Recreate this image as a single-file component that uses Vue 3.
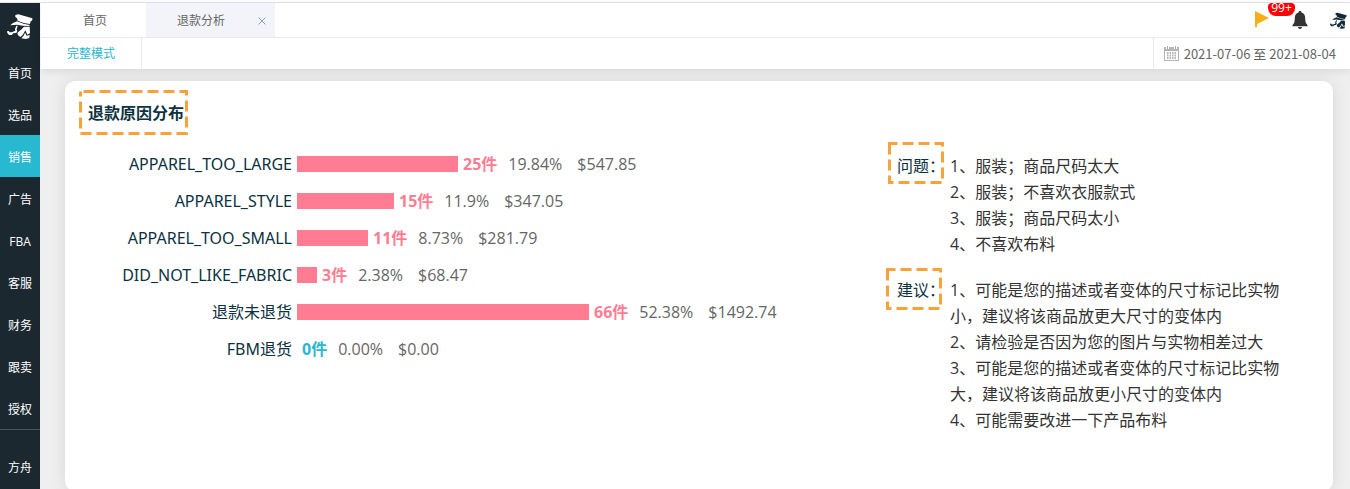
<script setup>
const navItems = ['首页', '选品', '销售', '广告', 'FBA', '客服', '财务', '跟卖', '授权']
const activeNav = '销售'

const PX_PER_PERCENT = 8.1
const MAX_BAR = 292

const reasons = [
  { label: 'APPAREL_TOO_LARGE', count: 25, percent: '19.84%', amount: '$547.85' },
  { label: 'APPAREL_STYLE', count: 15, percent: '11.9%', amount: '$347.05' },
  { label: 'APPAREL_TOO_SMALL', count: 11, percent: '8.73%', amount: '$281.79' },
  { label: 'DID_NOT_LIKE_FABRIC', count: 3, percent: '2.38%', amount: '$68.47' },
  { label: '退款未退货', count: 66, percent: '52.38%', amount: '$1492.74' },
  { label: 'FBM退货', count: 0, percent: '0.00%', amount: '$0.00' },
]
const barWidth = (r) => Math.ceil(Math.min(parseFloat(r.percent) * PX_PER_PERCENT, MAX_BAR)) + 'px'

const notes = [
  {
    title: '问题：',
    key: 'problem',
    lines: ['1、服装；商品尺码太大', '2、服装；不喜欢衣服款式', '3、服装；商品尺码太小', '4、不喜欢布料'],
  },
  {
    title: '建议：',
    key: 'advice',
    lines: [
      '1、可能是您的描述或者变体的尺寸标记比实物小，建议将该商品放更大尺寸的变体内',
      '2、请检验是否因为您的图片与实物相差过大',
      '3、可能是您的描述或者变体的尺寸标记比实物大，建议将该商品放更小尺寸的变体内',
      '4、可能需要改进一下产品布料',
    ],
  },
]
</script>

<template>
  <div class="app">
    <svg class="symbols" width="0" height="0" aria-hidden="true">
      <symbol id="detective" viewBox="6 4 78 78">
        <path d="M31 7 L40 5 L82 17 L82 22 L76 28 L75 34 L56 31 L38 24 L36 17 L31 13 Z" />
        <path d="M36 26 L55 33 L74 37 L73 40 L54 39 L36 36 L16 38 L24 31 Z" />
        <path d="M34 39 L38 39 L35 50 L37 55 L34 61 L24 62 L21 67 L12 67 L7 61 L6 56 L11 55 L14 59 L20 59 L31 54 L30 49 Z" />
        <path d="M57 42 L74 42 L75 62 L67 66 L61 53 L57 60 L53 67 L46 73 L39 68 L37 61 L44 54 L50 50 Z" />
        <path d="M60 60 L65 69 L74 67 L73 76 L62 79 L49 77 L56 69 Z" />
      </symbol>
    </svg>

    <div class="shell">
      <aside class="sidebar">
        <a class="brand" href="#" aria-label="方舟">
          <svg class="brand-logo"><use href="#detective" /></svg>
        </a>
        <nav>
          <a v-for="item in navItems" :key="item" href="#" class="nav-item" :class="{ active: item === activeNav }">{{ item }}</a>
          <a href="#" class="nav-item nav-last">方舟</a>
        </nav>
      </aside>

      <div class="page">
        <header class="header">
          <div class="tabs">
            <button class="tab" type="button">首页</button>
            <div class="tab current">
              <button class="tab-name" type="button">退款分析</button>
              <button class="tab-close" type="button" aria-label="关闭">
                <svg width="8" height="8" viewBox="0 0 8 8"><path d="M0.5 0.5 L7.5 7.5 M7.5 0.5 L0.5 7.5" /></svg>
              </button>
            </div>
            <div class="tools">
              <button class="tool flag" type="button" aria-label="消息">
                <svg width="15" height="17" viewBox="0 0 15 17"><path d="M0 0 L14 7 L2 13 V16 H0 Z" fill="#faad14" /></svg>
                <span class="badge">99+</span>
              </button>
              <button class="tool" type="button" aria-label="通知">
                <svg width="16" height="18" viewBox="0 0 16 18">
                  <path d="M8 0 C9 0 9.500 0.700 9.500 1.500 C12 2.200 13.200 4.200 13.200 7 C13.200 11 13.800 12.500 15.500 14 V15.200 H0.500 V14 C2.200 12.500 2.800 11 2.800 7 C2.800 4.200 4 2.200 6.500 1.500 C6.500 0.700 7 0 8 0 Z M6 16 H10 C10 17.300 9 18 8 18 C7 18 6 17.300 6 16 Z" fill="#333" />
                </svg>
              </button>
              <button class="tool user" type="button" aria-label="账户">
                <svg class="user-logo"><use href="#detective" /></svg>
              </button>
            </div>
          </div>
          <div class="toolbar">
            <button class="mode" type="button">完整模式</button>
            <button class="dates" type="button">
              <svg width="15" height="15" viewBox="0 0 15 15">
                <path d="M0 1 H15 V15 H0 Z M1 5 V14 H14 V5 Z" fill="#b5b5b5" fill-rule="evenodd" />
                <path d="M2 0 H5 V3 H2 Z M10 0 H13 V3 H10 Z" fill="#fff" />
                <path d="M3 0 H4 V3 H3 Z M11 0 H12 V3 H11 Z" fill="#aaa" />
                <path d="M3 7 H12 M3 9.500 H12 M3 12 H12" stroke="#b5b5b5" stroke-width="2" stroke-dasharray="1.500 1" />
              </svg>
              <span>2021-07-06 至 2021-08-04</span>
            </button>
          </div>
        </header>

        <main class="content">
          <section class="card">
            <h2 class="card-title">
              退款原因分布
              <svg class="mark mark-title" viewBox="0 0 109 45"><path d="M1.500 1.500 H107.500 V43.500 H1.500 Z" /></svg>
            </h2>
            <div class="columns">
              <ul class="chart">
                <li v-for="r in reasons" :key="r.label" class="row">
                  <span class="row-label">{{ r.label }}</span>
                  <span class="bar" :style="{ width: barWidth(r) }"></span>
                  <strong class="count" :class="{ zero: r.count === 0 }">{{ r.count }}件</strong>
                  <span class="percent">{{ r.percent }}</span>
                  <span class="amount">{{ r.amount }}</span>
                </li>
              </ul>
              <div class="notes">
                <div v-for="n in notes" :key="n.key" class="note">
                  <h3 class="note-title">
                    {{ n.title }}
                    <svg class="mark" :class="'mark-' + n.key" viewBox="0 0 56 42"><path d="M1.500 1.500 H54.500 V40.500 H1.500 Z" /></svg>
                  </h3>
                  <div class="note-body">
                    <p v-for="line in n.lines" :key="line">{{ line }}</p>
                  </div>
                </div>
              </div>
            </div>
          </section>
        </main>
      </div>
    </div>
  </div>
</template>

<style>
body {
  margin: 0;
}
</style>

<style scoped>
.app {
  height: 100vh;
  box-sizing: border-box;
  padding-top: 2px;
  overflow: hidden;
  background: #fff;
  color: #333;
  font: 16px/26px "Open Sans", "Noto Sans CJK SC", sans-serif;
}
.symbols {
  position: absolute;
}
button {
  margin: 0;
  padding: 0;
  border: 0;
  background: none;
  color: inherit;
  font: inherit;
}
a {
  color: inherit;
  text-decoration: none;
}
.shell {
  display: flex;
  height: 100%;
  border-top: 1px solid #e4e6ec;
}
.sidebar {
  flex: none;
  width: 40px;
  background: #1b2830;
  color: #fff;
  font-size: 12px;
}
.brand {
  display: flex;
  align-items: center;
  justify-content: center;
  height: 48px;
}
.brand-logo {
  width: 26px;
  height: 26px;
  fill: #fff;
}
.nav-item {
  display: block;
  height: 42px;
  line-height: 46px;
  text-align: center;
  white-space: nowrap;
}
.nav-item.active {
  background: #28b8d0;
}
.nav-last {
  height: 74px;
  line-height: 76px;
  border-top: 1px solid #4b555c;
}
.page {
  display: flex;
  flex-direction: column;
  flex: 1;
  min-width: 0;
}
.header {
  position: relative;
  z-index: 1;
  margin-left: 1px;
  background: #fff;
  color: #666;
  font-size: 12px;
  box-shadow: 0 2px 8px rgba(0, 0, 0, 0.1);
}
.tabs {
  display: flex;
  height: 34px;
  border-bottom: 1px solid #e8eaec;
}
.tab {
  box-sizing: border-box;
  width: 105px;
  padding: 2px 0 0 3px;
}
.tab.current {
  display: flex;
  align-items: center;
  justify-content: space-between;
  width: 129px;
  padding: 2px 9px 0 31px;
  background: #f3f4f9;
}
.tab-close {
  display: flex;
}
.tab-close path {
  fill: none;
  stroke: #7fa6c6;
}
.tools {
  display: flex;
  align-items: flex-start;
  margin-left: auto;
  padding: 8px 3px 0 0;
}
.tool {
  display: flex;
  position: relative;
}
.flag {
  width: 37px;
}
.badge {
  position: absolute;
  left: 13px;
  top: -8px;
  width: 27px;
  height: 13px;
  border-radius: 4px 4px 8px 8px;
  background: #f00;
  color: #fff;
  line-height: 10px;
  text-align: center;
}
.user {
  margin: 1px 0 0 22px;
}
.user-logo {
  width: 17px;
  height: 18px;
  fill: #12293c;
}
.toolbar {
  display: flex;
  justify-content: space-between;
  height: 31px;
}
.mode {
  width: 101px;
  border-right: 1px solid #e8eaec;
  color: #28b8d0;
}
.dates {
  display: flex;
  align-items: center;
  gap: 5px;
  padding: 0 14px 0 10px;
  border-left: 1px solid #e8eaec;
  font-family: "Noto Sans CJK SC", sans-serif;
  font-size: 13px;
}
.content {
  flex: 1;
  padding: 12px 17px 0 25px;
  background: #efefef;
}
.card {
  box-sizing: border-box;
  min-height: calc(100vh - 79px);
  padding: 19px 0 0 23px;
  border-radius: 10px;
  background: #fff;
  box-shadow: 0 0 16px rgba(0, 0, 0, 0.1);
}
.card-title {
  position: relative;
  width: max-content;
  margin: 0 0 22px;
  color: #0c3240;
  font-size: 16px;
  font-weight: 600;
}
.columns {
  display: grid;
  grid-template-columns: 809fr 436fr;
}
.chart {
  margin: 0;
  padding: 0;
  list-style: none;
}
.row {
  display: flex;
  align-items: center;
  height: 32px;
  margin-bottom: 5px;
  color: #666;
  white-space: nowrap;
}
.row-label {
  width: 204px;
  margin-right: 5px;
  color: #0c3240;
  font-family: "Noto Sans", "Noto Sans CJK SC", sans-serif;
  text-align: right;
}
.bar {
  height: 16px;
  background: #ff7c93;
}
.count {
  margin: 0 11px 0 5px;
  color: #ff7c93;
}
.count.zero {
  color: #28b8d0;
}
.amount {
  margin-left: 15px;
}
.notes {
  padding-top: 5px;
}
.note {
  display: flex;
  margin-bottom: 20px;
}
.note-title {
  position: relative;
  flex: none;
  width: 53px;
  margin: 0;
  color: #0c3240;
  font-size: 16px;
  font-weight: 400;
}
.note-body {
  max-width: 340px;
}
.note-body p {
  margin: 0;
}
.mark {
  position: absolute;
  width: 56px;
  height: 42px;
  fill: none;
  stroke: #f8a23c;
  stroke-width: 3px;
  stroke-dasharray: 11 5;
  stroke-dashoffset: 3px;
}
.mark-title {
  left: -9px;
  top: -10px;
  width: 109px;
  height: 45px;
  stroke-dashoffset: 13px;
}
.mark-problem {
  left: -9px;
  top: -11px;
}
.mark-advice {
  left: -11px;
  top: -9px;
}
</style>
